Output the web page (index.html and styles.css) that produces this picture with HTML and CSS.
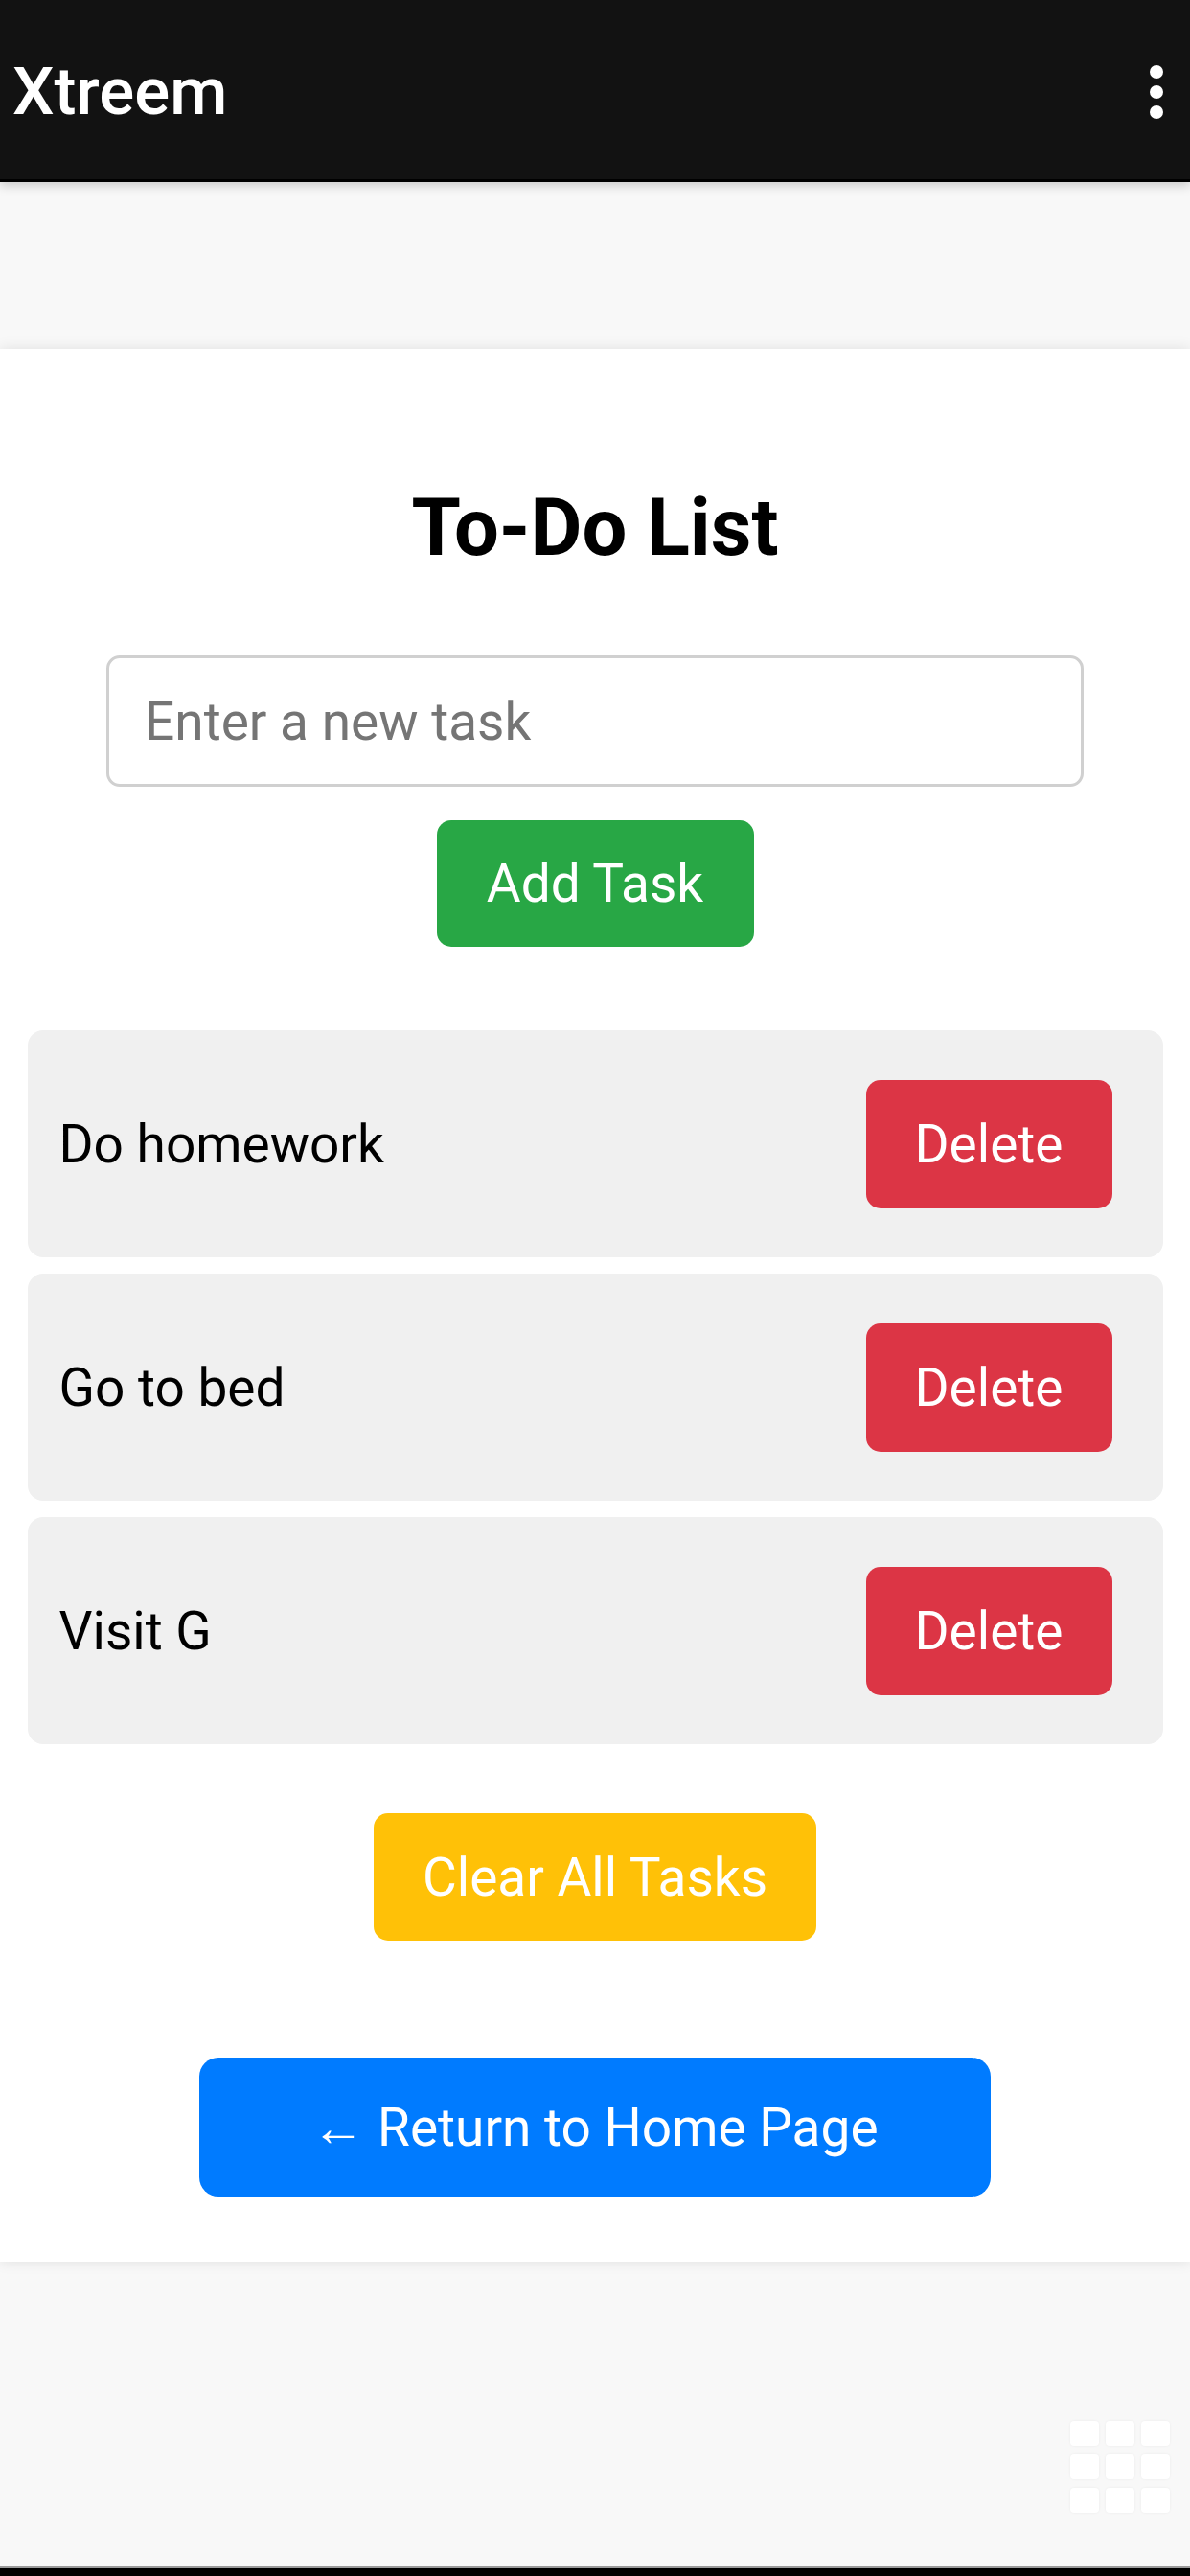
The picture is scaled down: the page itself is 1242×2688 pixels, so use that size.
FILE: index.html
```html
<!DOCTYPE html>
<html>
<head>
  <title>Xtreem - To-Do List</title>
  <link rel="stylesheet" href="styles.css">
</head>
<body>
  <div class="screen">
    <header class="appbar">
      <span class="appbar-title">Xtreem</span>
      <svg class="kebab" width="14" height="56" viewBox="0 0 14 56">
        <circle cx="7" cy="7" r="7" fill="#fff"/>
        <circle cx="7" cy="28" r="7" fill="#fff"/>
        <circle cx="7" cy="49" r="7" fill="#fff"/>
      </svg>
    </header>
    <main class="content">
      <div class="card">
        <h2>To-Do List</h2>
        <input type="text" id="taskInput" placeholder="Enter a new task">
        <button class="btn btn-add" onclick="addTask()">Add Task</button>
        <ul id="taskList" class="task-list">
          <li class="task"><span>Do homework</span><button class="btn btn-delete">Delete</button></li>
          <li class="task"><span>Go to bed</span><button class="btn btn-delete">Delete</button></li>
          <li class="task"><span>Visit G</span><button class="btn btn-delete">Delete</button></li>
        </ul>
        <button class="btn btn-clear" onclick="clearTasks()">Clear All Tasks</button>
        <a class="btn btn-home" href="#">&larr; Return to Home Page</a>
      </div>
      <div class="grid-fab">
        <i></i><i></i><i></i>
        <i></i><i></i><i></i>
        <i></i><i></i><i></i>
      </div>
    </main>
    <div class="navbar"></div>
  </div>
  <script>
    function addTask()
    {
      const input = document.getElementById('taskInput');
      const text = input.value.trim();
      if (!text) return;
      const li = document.createElement('li');
      li.className = 'task';
      li.innerHTML = `<span>${text}</span><button class="btn btn-delete">Delete</button>`;
      document.getElementById('taskList').appendChild(li);
      input.value = '';
    }
    function clearTasks()
    {
      document.getElementById('taskList').innerHTML = '';
    }
    document.getElementById('taskList').addEventListener('click', e => {
      if (e.target.classList.contains('btn-delete')) e.target.parentElement.remove();
    });
  </script>
</body>
</html>
```
FILE: styles.css
```css
body
{
  margin: 0;
  font-family: Roboto, "Noto Sans", Arial, sans-serif;
  background-color: #f8f8f8;
}
.screen
{
  display: flex;
  flex-direction: column;
  height: 2688px;
}
.appbar
{
  height: 190px;
  flex: none;
  display: flex;
  align-items: center;
  justify-content: space-between;
  padding: 4px 28px 0 13px;
  box-sizing: border-box;
  background-color: #121212;
  border-bottom: 3px solid #000;
  box-shadow: 0 4px 10px rgba(0, 0, 0, 0.18);
  position: relative;
  z-index: 2;
}
.appbar-title
{
  color: #fff;
  font-size: 69px;
  font-weight: 500;
}
.content
{
  flex: 1;
  padding-top: 174px;
  position: relative;
}
.card
{
  background-color: #fff;
  padding: 138px 0 68px;
  display: flex;
  flex-direction: column;
  align-items: center;
  box-shadow: 0 0 14px rgba(0, 0, 0, 0.1);
}
h2
{
  margin: 0;
  font-size: 83px;
  line-height: 97px;
  font-weight: bold;
  color: #000;
}
input
{
  margin-top: 85px;
  width: 1020px;
  height: 137px;
  box-sizing: border-box;
  padding: 0 37px;
  font-family: inherit;
  font-size: 55px;
  border: 3px solid #d0d0d0;
  border-radius: 14px;
  outline: none;
}
input::placeholder
{
  color: #757575;
}
.btn
{
  display: flex;
  align-items: center;
  justify-content: center;
  box-sizing: border-box;
  font-family: inherit;
  font-size: 55px;
  color: #fff;
  border: none;
  border-radius: 15px;
  padding: 0 50px;
  cursor: pointer;
  text-decoration: none;
}
.btn-add
{
  margin-top: 35px;
  height: 132px;
  width: 331px;
  background-color: #28a745;
}
.task-list
{
  list-style: none;
  margin: 87px 0 0;
  padding: 0;
  width: 1185px;
  display: flex;
  flex-direction: column;
  gap: 17px;
}
.task
{
  height: 237px;
  box-sizing: border-box;
  display: flex;
  align-items: center;
  justify-content: space-between;
  padding: 0 53px 0 33px;
  background-color: #f0f0f0;
  border-radius: 16px;
  font-size: 55px;
  color: #000;
}
.btn-delete
{
  width: 257px;
  height: 134px;
  background-color: #dc3545;
}
.btn-clear
{
  margin-top: 72px;
  width: 462px;
  height: 133px;
  background-color: #ffc107;
}
.btn-home
{
  margin-top: 122px;
  width: 826px;
  height: 145px;
  border-radius: 20px;
  background-color: #007bff;
}
.grid-fab
{
  position: absolute;
  right: 21px;
  bottom: 56px;
  display: grid;
  grid-template-columns: repeat(3, 30px);
  grid-auto-rows: 26px;
  gap: 9px 7px;
}
.grid-fab i
{
  background-color: #fff;
  border-radius: 4px;
  box-shadow: 0 0 3px rgba(0, 0, 0, 0.06);
}
.navbar
{
  height: 8px;
  flex: none;
  background-color: #000;
  border-top: 2px solid #9a9a9a;
}
```
